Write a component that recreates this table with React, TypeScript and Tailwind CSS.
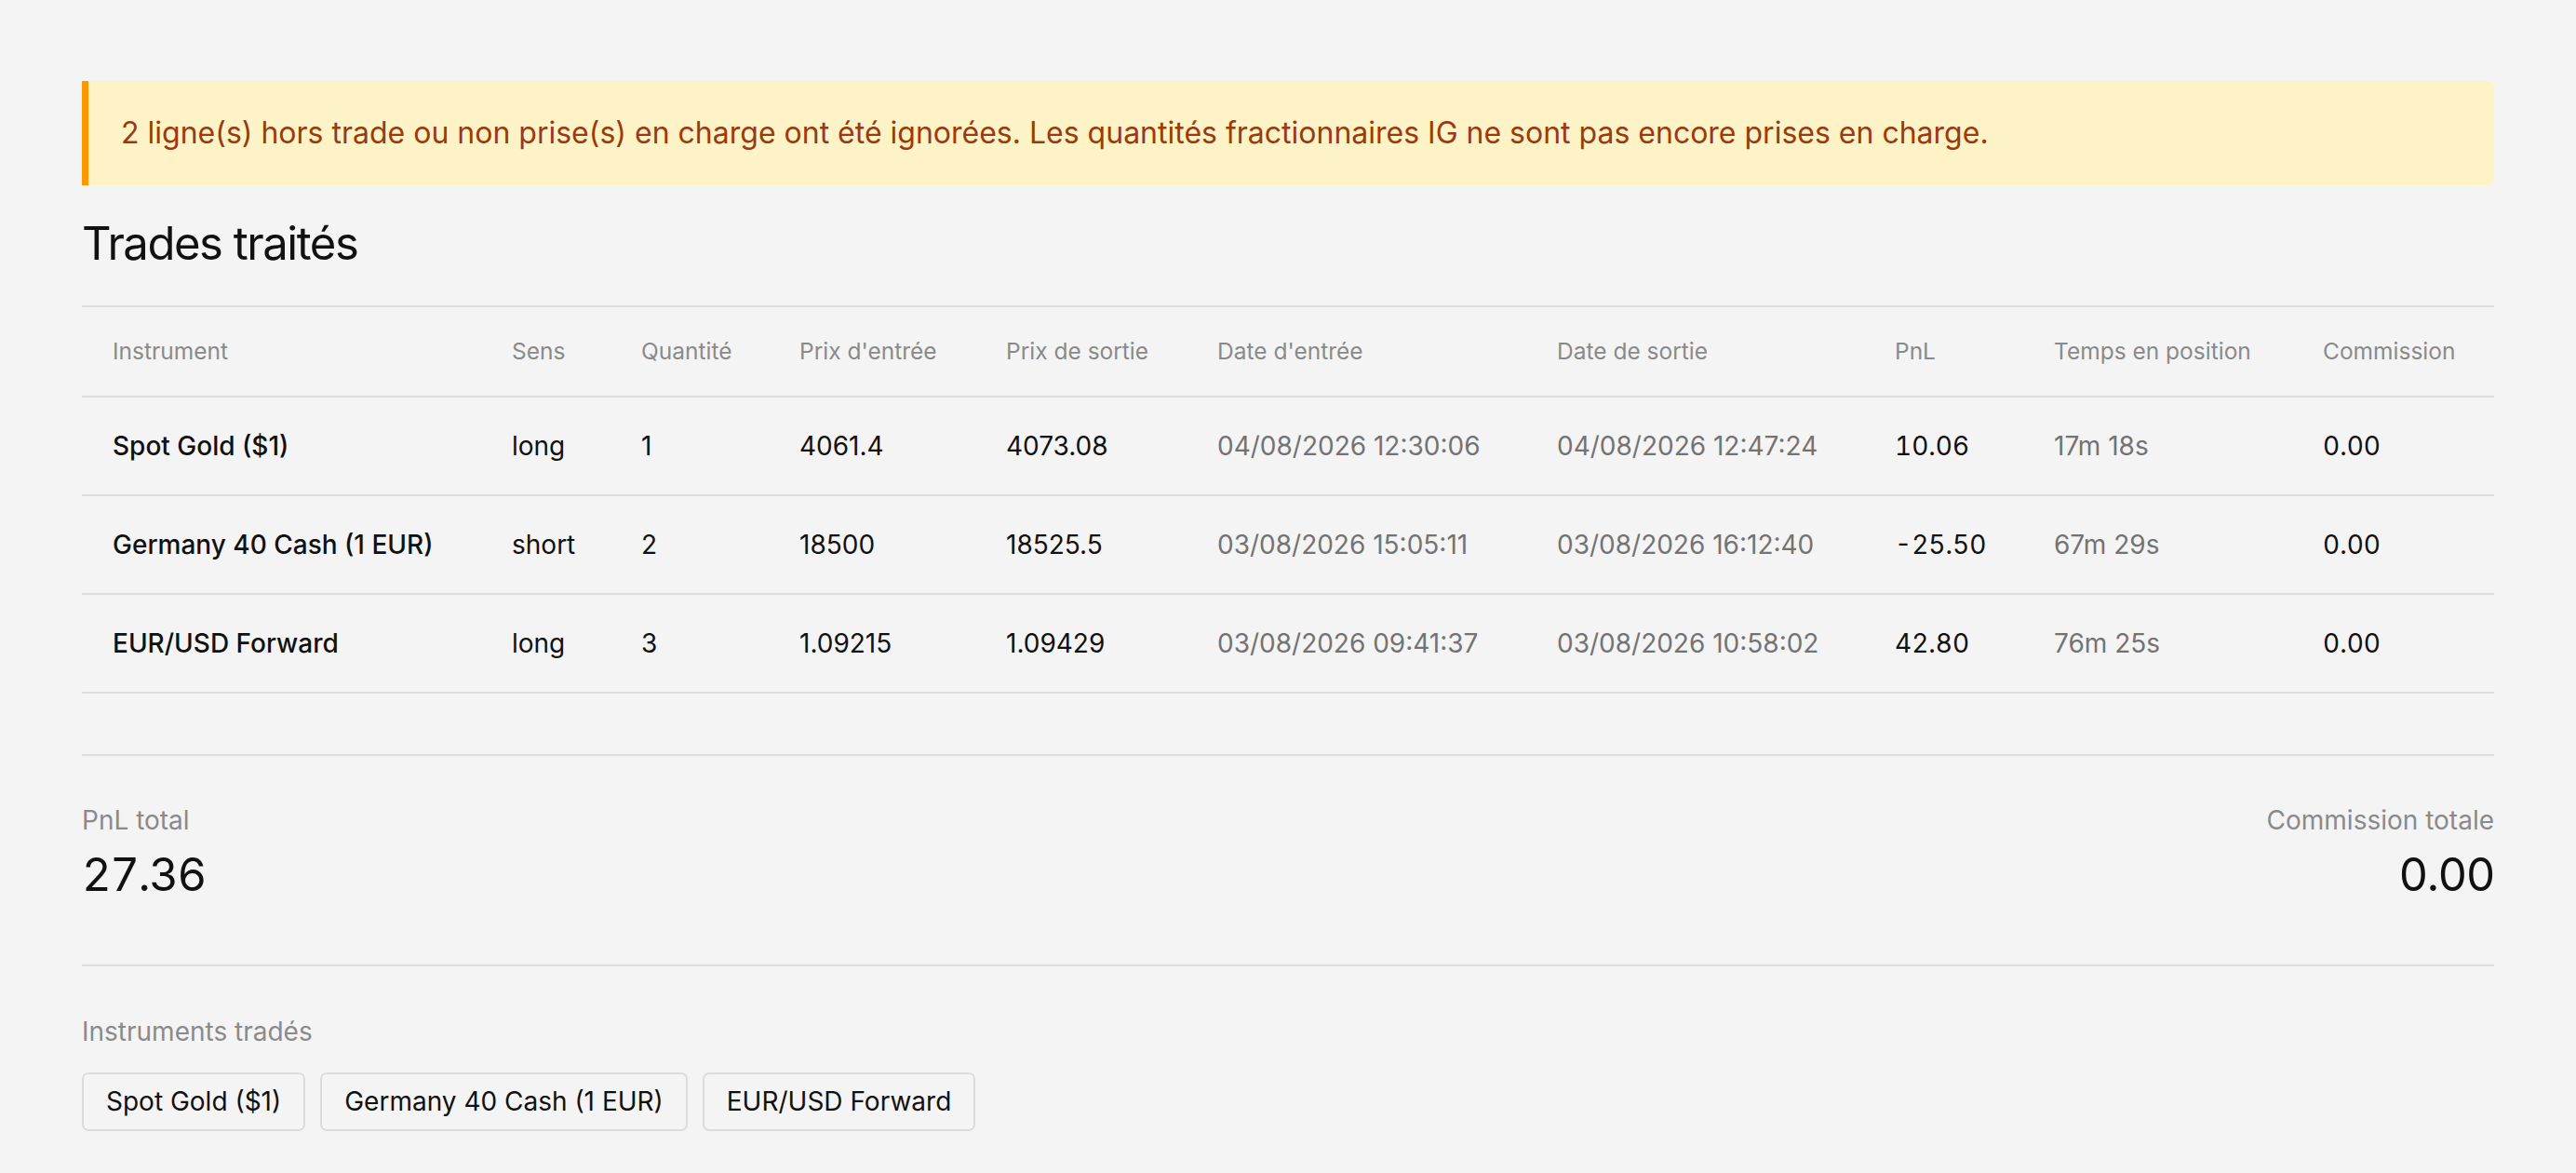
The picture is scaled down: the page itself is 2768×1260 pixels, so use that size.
import React from "react";

const trades = [
  {
    instrument: "Spot Gold ($1)",
    side: "long",
    qty: "1",
    entry: "4061.4",
    exit: "4073.08",
    entryDate: "04/08/2026 12:30:06",
    exitDate: "04/08/2026 12:47:24",
    pnl: "10.06",
    duration: "17m 18s",
    commission: "0.00",
  },
  {
    instrument: "Germany 40 Cash (1 EUR)",
    side: "short",
    qty: "2",
    entry: "18500",
    exit: "18525.5",
    entryDate: "03/08/2026 15:05:11",
    exitDate: "03/08/2026 16:12:40",
    pnl: "-25.50",
    duration: "67m 29s",
    commission: "0.00",
  },
  {
    instrument: "EUR/USD Forward",
    side: "long",
    qty: "3",
    entry: "1.09215",
    exit: "1.09429",
    entryDate: "03/08/2026 09:41:37",
    exitDate: "03/08/2026 10:58:02",
    pnl: "42.80",
    duration: "76m 25s",
    commission: "0.00",
  },
];

const headers = [
  "Instrument",
  "Sens",
  "Quantité",
  "Prix d'entrée",
  "Prix de sortie",
  "Date d'entrée",
  "Date de sortie",
  "PnL",
  "Temps en position",
  "Commission",
];

export default function App() {
  return (
    <div className="min-h-screen bg-[#f4f4f4] px-[88px] pt-[87px] pb-[48px] font-['Inter',sans-serif] text-[#111]">
      {/* warning */}
      <div className="rounded-r-[7px] border-l-[7px] border-[#ff9800] bg-[#fef2c7] px-[35px] py-[32px] text-[32px] leading-[48px] text-[#9a3a0e]">
        2 ligne(s) hors trade ou non prise(s) en charge ont été ignorées. Les quantités fractionnaires IG ne sont pas encore prises en charge.
      </div>

      <h2 className="mt-[34px] text-[49px] leading-[1.2] font-normal tracking-[-0.03em]">Trades traités</h2>

      <table className="mt-[36px] w-full table-fixed border-collapse text-left">
        <colgroup>
          <col className="w-[429px]" />
          <col className="w-[139px]" />
          <col className="w-[170px]" />
          <col className="w-[222px]" />
          <col className="w-[227px]" />
          <col className="w-[365px]" />
          <col className="w-[363px]" />
          <col className="w-[171px]" />
          <col className="w-[289px]" />
          <col className="w-[217px]" />
        </colgroup>
        <thead>
          <tr className="border-y-2 border-[#dedede]">
            {headers.map((h) => (
              <th key={h} className="h-[97px] px-[33px] text-[24.5px] leading-[37px] font-normal text-[#8a8a8a]">
                {h}
              </th>
            ))}
          </tr>
        </thead>
        <tbody className="text-[28px] leading-[42px]">
          {trades.map((t) => (
            <tr key={t.instrument} className="border-b-2 border-[#dedede]">
              <td className="h-[106px] px-[33px] font-medium">{t.instrument}</td>
              <td className="px-[33px]">{t.side}</td>
              <td className="px-[33px]">{t.qty}</td>
              <td className="px-[33px]">{t.entry}</td>
              <td className="px-[33px]">{t.exit}</td>
              <td className="px-[33px] text-[#737373]">{t.entryDate}</td>
              <td className="px-[33px] text-[#737373]">{t.exitDate}</td>
              <td className="px-[33px] tabular-nums">{t.pnl}</td>
              <td className="px-[33px] text-[#737373]">{t.duration}</td>
              <td className="px-[33px] tabular-nums">{t.commission}</td>
            </tr>
          ))}
        </tbody>
      </table>

      {/* totals */}
      <div className="mt-[65px] flex items-start justify-between border-t-2 border-[#dedede] pt-[48px] pb-[66px]">
        <div>
          <div className="text-[28px] leading-[42px] text-[#8a8a8a]">PnL total</div>
          <div className="mt-[9px] text-[49px] leading-[1.2] tracking-[-0.03em] tabular-nums">27.36</div>
        </div>
        <div className="text-right">
          <div className="text-[28px] leading-[42px] text-[#8a8a8a]">Commission totale</div>
          <div className="mt-[9px] text-[49px] leading-[1.2] tracking-[-0.03em] tabular-nums">0.00</div>
        </div>
      </div>

      {/* instruments */}
      <div className="border-t-2 border-[#dedede] pt-[49px]">
        <div className="text-[28px] leading-[42px] text-[#8a8a8a]">Instruments tradés</div>
        <div className="mt-[23px] flex flex-wrap gap-[16px]">
          {trades.map((t) => (
            <span
              key={t.instrument}
              className="rounded-[7px] border-2 border-[#dcdcdc] px-[24px] py-[8.5px] text-[28px] leading-[42px]"
            >
              {t.instrument}
            </span>
          ))}
        </div>
      </div>
    </div>
  );
}
